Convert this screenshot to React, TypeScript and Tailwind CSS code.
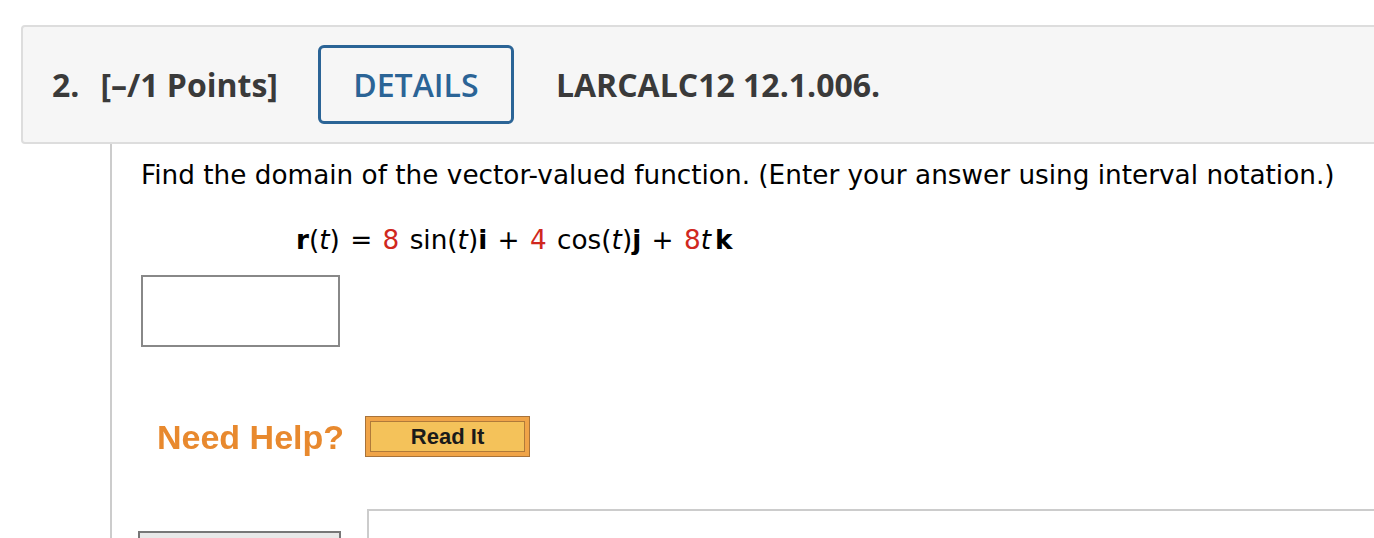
import React from "react";

export default function App() {
  return (
    <div className="w-[1374px] h-[538px] overflow-hidden bg-white relative">
      <div className="pt-[25px] pl-[21px]">
        <div
          className="w-[1420px] h-[119px] border-2 border-[#dddddd] rounded-[4px] bg-[#f6f6f6] flex items-center text-[#3a3a3a] font-bold text-[32px]"
          style={{ fontFamily: '"Open Sans", sans-serif' }}
        >
          <span className="ml-[29px]">2.</span>
          <span className="ml-[21px]">[–/1 Points]</span>
          <div className="ml-[40px] w-[196px] h-[79px] shrink-0 border-[3px] border-[#2b6496] rounded-[6px] flex items-center justify-center text-[#2b6496] font-semibold text-[32px]">
            DETAILS
          </div>
          <span className="ml-[42px]">LARCALC12 12.1.006.</span>
        </div>
        <div className="ml-[89px] border-l-2 border-[#cccccc] pl-[29px] h-[400px]">
          <div
            className="text-black text-[26.3px] leading-[30px] pt-[16px]"
            style={{ fontFamily: '"DejaVu Sans", Verdana, sans-serif' }}
          >
            <div className="whitespace-nowrap">Find the domain of the vector-valued function. (Enter your answer using interval notation.)</div>
            <div className="mt-[35px] ml-[155px] whitespace-pre [word-spacing:2px]">
              <span className="font-bold">r</span>(<i>t</i>) = <span className="text-[#d0281e]">8</span> sin(<i>t</i>)<span className="font-bold">i</span> + <span className="text-[#d0281e]">4</span> cos(<i>t</i>)<span className="font-bold">j</span> + <span className="text-[#d0281e]">8</span><i>t</i><span className="font-bold ml-[4px]">k</span>
            </div>
          </div>
          <div className="mt-[20px] w-[199px] h-[72px] border-2 border-[#888888] bg-white" />
          <div className="mt-[69px] flex items-center">
            <span
              className="ml-[16px] text-[34px] leading-[40px] font-bold text-[#e8892e] blur-[0.4px]"
              style={{ fontFamily: '"Liberation Sans", Arial, sans-serif' }}
            >
              Need Help?
            </span>
            <div className="ml-[21px] w-[165px] h-[41px] shrink-0 border border-[#a8733a] bg-[#f0a448] p-[4px]">
              <div className="w-full h-full border border-[#b07a3a] bg-[#f4c25a] flex items-center justify-center">
                <span
                  className="text-[22px] leading-none font-bold text-[#1a1a1a]"
                  style={{ fontFamily: '"Liberation Sans", Arial, sans-serif' }}
                >
                  Read It
                </span>
              </div>
            </div>
          </div>
          <div className="mt-[52px] flex items-start">
            <div className="mt-[22px] w-[203px] h-[20px] shrink-0 border-2 border-[#777777] bg-[#e8e8e8] -ml-[3px]" />
            <div className="ml-[26px] w-[1100px] h-[60px] shrink-0 border-2 border-[#cccccc] bg-white" />
          </div>
        </div>
      </div>
    </div>
  );
}
